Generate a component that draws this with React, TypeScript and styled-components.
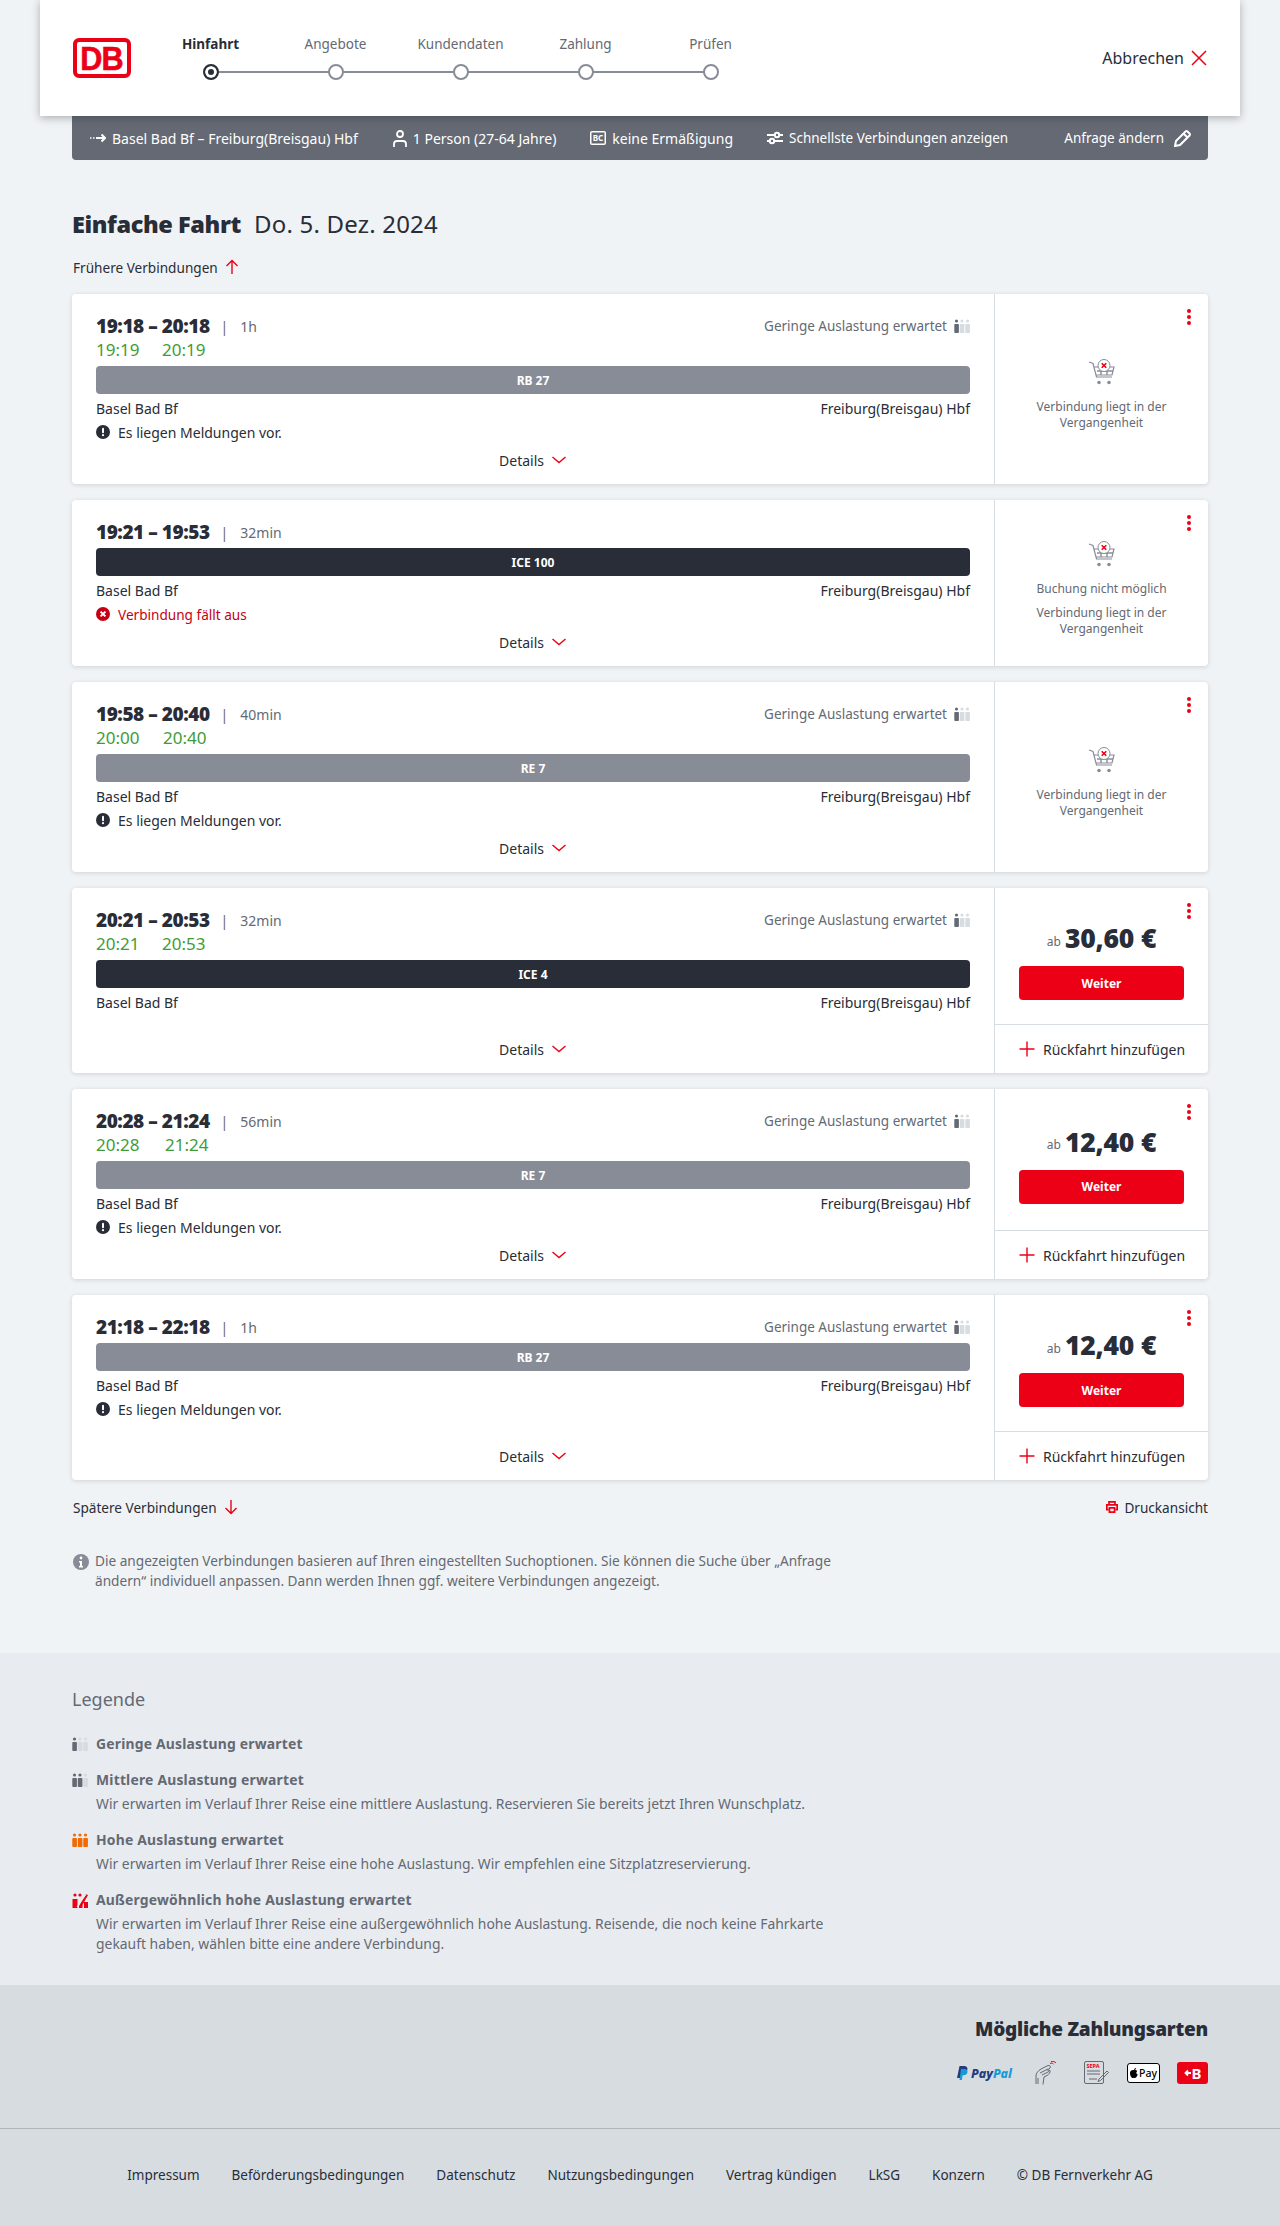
import React from "react";
import styled, { createGlobalStyle } from "styled-components";

const RED = "#ec0016";
const INK = "#282d37";
const MUTED = "#646973";
const FONT = `"Noto Sans", "Liberation Sans", sans-serif`;

const Global = createGlobalStyle`
  html, body { margin: 0; padding: 0; background: #f0f3f5; }
  body { font-family: ${FONT}; color: ${INK}; font-size: 14px; }
  * { box-sizing: border-box; }
`;

const Page = styled.div`
  width: 1280px;
  min-height: 2226px;
  display: flex;
  flex-direction: column;
`;

const Header = styled.header`
  position: relative;
  z-index: 2;
  margin: 0 40px;
  height: 116px;
  padding: 0 33px;
  background: #fff;
  display: flex;
  align-items: center;
  box-shadow: 0 2px 8px rgba(40, 45, 55, 0.35);
`;

const Logo = styled.div`
  width: 58px;
  height: 40px;
  border: 4px solid ${RED};
  border-radius: 6px;
  background: #fff;
  color: ${RED};
  display: flex;
  align-items: center;
  justify-content: center;
  overflow: hidden;
  font: 700 34px/1 "Liberation Sans", sans-serif;
  -webkit-text-stroke: 0.6px ${RED};
  span { transform: scaleX(0.9); display: block; letter-spacing: -1px; }
`;

const Stepper = styled.ol`
  list-style: none;
  margin: 0 0 2px 17px;
  padding: 0;
  display: flex;
`;

const Step = styled.li<{ $last?: boolean }>`
  position: relative;
  width: 125px;
  height: 46px;
  display: flex;
  flex-direction: column;
  align-items: center;
  justify-content: space-between;
  &::after {
    content: "";
    display: ${(p) => (p.$last ? "none" : "block")};
    position: absolute;
    left: 62px;
    width: 125px;
    bottom: 7px;
    height: 2px;
    background: #878c96;
  }
`;

const StepLabel = styled.span<{ $active?: boolean }>`
  height: 20px;
  line-height: 20px;
  font-size: 13.5px;
  white-space: nowrap;
  font-weight: ${(p) => (p.$active ? 700 : 400)};
  color: ${(p) => (p.$active ? INK : MUTED)};
`;

const StepDot = styled.span<{ $active?: boolean }>`
  position: relative;
  z-index: 1;
  width: 16px;
  height: 16px;
  border-radius: 50%;
  background: ${(p) => (p.$active ? INK : "#fff")};
  box-shadow: ${(p) => (p.$active ? "inset 0 0 0 3px #fff" : "none")};
  border: 2px solid ${(p) => (p.$active ? INK : "#878c96")};
`;

const Cancel = styled.div`
  margin-left: auto;
  display: flex;
  align-items: center;
  gap: 7px;
  font-size: 16px;
`;

const SummaryBar = styled.div`
  margin: 0 72px;
  height: 44px;
  padding: 0 17px 0 18px;
  background: ${MUTED};
  border-radius: 0 0 4px 4px;
  color: #fff;
  display: flex;
  align-items: center;
  font-size: 14px;
`;

const SummaryItem = styled.span<{ $gap: number; $tight?: boolean }>`
  display: flex;
  align-items: center;
  gap: 6px;
  margin-right: ${(p) => p.$gap}px;
  white-space: nowrap;
  font-size: ${(p) => (p.$tight ? "13.5px" : "14px")};
`;

const ChangeRequest = styled.span`
  margin-left: auto;
  display: flex;
  align-items: center;
  gap: 10px;
  font-size: 13.5px;
`;

const Main = styled.main`
  margin: 0 72px;
  display: flex;
  flex-direction: column;
`;

const Title = styled.h1`
  margin: 47px 0 0;
  height: 34px;
  line-height: 34px;
  font-size: 24px;
  font-weight: 400;
  display: flex;
  gap: 13px;
  letter-spacing: 0.2px;
  strong { font-weight: 900; font-size: 23.5px; letter-spacing: -0.4px; }
`;

const MoreLink = styled.div`
  height: 22px;
  display: flex;
  align-items: center;
  gap: 6px;
  padding-left: 1px;
  font-size: 13.6px;
`;

const EarlierRow = styled.div`
  margin: 15px 0 16px;
`;

const CardList = styled.div`
  display: flex;
  flex-direction: column;
  gap: 16px;
`;

const Card = styled.article`
  display: flex;
  background: #fff;
  border-radius: 4px;
  box-shadow: 0 1px 4px rgba(40, 45, 55, 0.16);
`;

const Left = styled.div`
  flex: 1;
  min-width: 0;
  padding: 20px 24px 11px;
  display: flex;
  flex-direction: column;
`;

const TimeRow = styled.div`
  height: 24px;
  display: flex;
  align-items: center;
`;

const Times = styled.strong`
  font-size: 19px;
  font-weight: 900;
  letter-spacing: -0.45px;
`;

const Duration = styled.span`
  font-size: 14px;
  color: ${MUTED};
  margin-left: 11px;
  &::before {
    content: "|";
    margin-right: 12px;
  }
`;

const Occupancy = styled.span`
  margin-left: auto;
  display: flex;
  align-items: center;
  gap: 7px;
  color: ${MUTED};
  font-size: 13.5px;
`;

const LiveRow = styled.div`
  height: 24px;
  display: flex;
  color: #3f9c35;
  font-size: 17px;
  line-height: 24px;
`;

const LiveTime = styled.span<{ $w: number }>`
  width: ${(p) => p.$w}px;
`;

const TrainBar = styled.div<{ $dark?: boolean }>`
  margin-top: 4px;
  height: 28px;
  border-radius: 4px;
  background: ${(p) => (p.$dark ? INK : "#878c96")};
  color: #fff;
  font-size: 12px;
  font-weight: 700;
  display: flex;
  align-items: center;
  justify-content: center;
`;

const Stations = styled.div`
  height: 28px;
  display: flex;
  align-items: center;
  justify-content: space-between;
  font-size: 14px;
`;

const Message = styled.div<{ $error?: boolean }>`
  height: 20px;
  display: flex;
  align-items: center;
  gap: 8px;
  font-size: ${(p) => (p.$error ? "13.6px" : "14px")};
  color: ${(p) => (p.$error ? "#c50014" : INK)};
`;

const Details = styled.div`
  margin-top: auto;
  padding-top: 6px;
  padding-bottom: 1px;
  height: 31px;
  display: flex;
  align-items: center;
  justify-content: center;
  gap: 7px;
  font-size: 14px;
`;

const Right = styled.div`
  position: relative;
  flex: 0 0 214px;
  border-left: 1px solid #d7dce1;
  display: flex;
  flex-direction: column;
`;

const Dots = styled.span`
  position: absolute;
  top: 15px;
  right: 17px;
  display: flex;
  flex-direction: column;
  gap: 2px;
  i {
    display: block;
    width: 4px;
    height: 4px;
    border-radius: 50%;
    background: ${RED};
  }
`;

const Past = styled.div`
  flex: 1;
  padding: 11px 24px 0;
  display: flex;
  flex-direction: column;
  align-items: center;
  justify-content: center;
  text-align: center;
  color: ${MUTED};
  font-size: 12px;
  line-height: 16px;
`;

const PastNote = styled.p`
  margin: 8px 0 0;
  &:first-of-type { margin-top: 13px; }
`;

const Offer = styled.div`
  flex: 1;
  padding: 34px 24px 24px;
  display: flex;
  flex-direction: column;
  justify-content: center;
  gap: 12px;
`;

const Price = styled.div`
  height: 32px;
  display: flex;
  align-items: center;
  justify-content: center;
  gap: 4px;
  small { font-size: 12px; color: ${MUTED}; margin-top: 6px; }
  strong { font-size: 26.5px; font-weight: 900; letter-spacing: -0.2px; }
`;

const Continue = styled.button`
  height: 34px;
  border: 0;
  border-radius: 4px;
  background: ${RED};
  color: #fff;
  font: 700 12px ${FONT};
`;

const ReturnRow = styled.div`
  height: 49px;
  border-top: 1px solid #d7dce1;
  padding-left: 24px;
  display: flex;
  align-items: center;
  gap: 8px;
  font-size: 14px;
`;

const BottomRow = styled.div`
  margin-top: 16px;
  display: flex;
  justify-content: space-between;
`;

const InfoBlock = styled.div`
  margin-top: 33px;
  padding-left: 1px;
  display: flex;
  gap: 6px;
  color: ${MUTED};
  font-size: 13.65px;
  line-height: 20px;
  svg { margin-top: 3px; flex: none; }
`;

const LegendSection = styled.section`
  margin-top: 62px;
  background: #e8ecf0;
  padding: 36px 72px 31px;
`;

const LegendTitle = styled.h2`
  margin: 0 0 25px;
  font-size: 18px;
  line-height: 20px;
  font-weight: 400;
  color: ${MUTED};
`;

const LegendEntry = styled.div`
  display: grid;
  grid-template-columns: 24px 1fr;
  margin-top: 16px;
  color: ${MUTED};
  font-size: 13.9px;
  line-height: 20px;
  align-items: center;
  strong { font-weight: 700; letter-spacing: 0.2px; }
`;

const LegendText = styled.p`
  grid-column: 2;
  margin: 4px 0 0;
`;

const PaymentSection = styled.section`
  background: #d7dce1;
  border-bottom: 1px solid #afb4bb;
  padding: 32px 72px 42px;
  display: flex;
  flex-direction: column;
  align-items: flex-end;
`;

const PaymentTitle = styled.h2`
  margin: 0;
  font-size: 19px;
  line-height: 24px;
  font-weight: 900;
  letter-spacing: -0.25px;
`;

const PaymentRow = styled.div`
  margin-top: 19px;
  height: 26px;
  display: flex;
  align-items: center;
`;

const PayPal = styled.span`
  display: flex;
  align-items: center;
  gap: 3px;
  font: italic 800 12.5px ${FONT};
  color: #253b80;
  b { color: #179bd7; font-weight: 800; }
`;

const ApplePay = styled.span`
  width: 33px;
  height: 20px;
  margin-left: 18px;
  border: 1px solid #000;
  border-radius: 3px;
  background: #fff;
  display: flex;
  align-items: center;
  justify-content: center;
  gap: 1px;
  color: #000;
  font-size: 10.5px;
  font-weight: 500;
`;

const DBCard = styled.span`
  width: 31px;
  height: 22px;
  margin-left: 17px;
  border-radius: 3px;
  background: ${RED};
  color: #fff;
  display: flex;
  align-items: center;
  justify-content: center;
  font-size: 15px;
  line-height: 1;
  font-weight: 700;
`;

const PayIcon = styled.svg<{ $m: number }>`
  margin-left: ${(p) => p.$m}px;
`;

const Footer = styled.footer`
  background: #d7dce1;
  padding: 36px 0 44px;
  display: flex;
  justify-content: center;
  gap: 32px;
  font-size: 13.5px;
  line-height: 20px;
`;

const Thin = ({ d, c = RED, s = 16, w = 1.4 }: { d: string; c?: string; s?: number; w?: number }) => (
  <svg width={s} height={s} viewBox="0 0 16 16" fill="none" stroke={c} strokeWidth={w}>
    <path d={d} />
  </svg>
);

const Chevron = () => <Thin d="M1.5 5 L8 10.5 L14.5 5" />;
const Up = () => <Thin d="M8 15V1.5M2.5 7L8 1.5L13.5 7" />;
const Down = () => <Thin d="M8 1V14.5M2.5 9L8 14.5L13.5 9" />;
const Plus = () => <Thin d="M0.5 8H15.5M8 0.5V15.5" />;
const Close = () => <Thin d="M1 1L15 15M15 1L1 15" w={1.5} />;

const Occ = ({ level, color = MUTED }: { level: number; color?: string }) => {
  const f = (i: number) => (i < level ? color : "#d7dce1");
  return (
    <svg width="16" height="14" viewBox="0 0 16 14">
      {[0, 1, 2].map((i) => (
        <g key={i} fill={f(i)}>
          <circle cx={2.5 + i * 5.5} cy="2" r="1.6" />
          <rect x={0.3 + i * 5.5} y="5" width="4.6" height="9" rx="0.8" />
        </g>
      ))}
    </svg>
  );
};

const OccRed = () => (
  <svg width="16" height="16" viewBox="0 0 16 16">
    <g fill={RED}>
      <circle cx="3" cy="3" r="1.6" />
      <circle cx="8" cy="3" r="1.6" />
      <path d="M0.5 7h5v9h-5zM7 14l7-12 2 1-5.5 10v3H7zM12 10h4v6h-4z" />
    </g>
    <path d="M5 15L15 1" stroke="#e8ecf0" strokeWidth="1" />
  </svg>
);

const Alert = () => (
  <svg width="14" height="14" viewBox="0 0 14 14">
    <circle cx="7" cy="7" r="7" fill={INK} />
    <rect x="6" y="2.8" width="2" height="5.4" rx="1" fill="#fff" />
    <circle cx="7" cy="10.2" r="1.1" fill="#fff" />
  </svg>
);

const Cancelled = () => (
  <svg width="14" height="14" viewBox="0 0 14 14">
    <circle cx="7" cy="7" r="7" fill="#c50014" />
    <path d="M4.6 4.6L9.4 9.4M9.4 4.6L4.6 9.4" stroke="#fff" strokeWidth="2" />
  </svg>
);

const Cart = () => (
  <svg width="28" height="28" viewBox="0 0 28 28" fill="none">
    <path d="M1 4L5 5.5L8.5 19H24" stroke="#878c96" strokeWidth="1.2" />
    <path d="M6 9H26L24 17H8" stroke="#878c96" strokeWidth="1.2" />
    <path d="M9 13H25M13 9V17M19 9V17" stroke="#878c96" strokeWidth="1.4" />
    <circle cx="11" cy="24.5" r="1.8" fill="#878c96" />
    <circle cx="21" cy="24.5" r="1.8" fill="#878c96" />
    <circle cx="16" cy="7.5" r="6" fill="#fff" stroke="#878c96" />
    <path d="M13.7 5.2L18.3 9.8M18.3 5.2L13.7 9.8" stroke={RED} strokeWidth="1.6" />
  </svg>
);

const Route = () => (
  <svg width="16" height="10" viewBox="0 0 16 10" fill="none" stroke="#fff">
    <path d="M0 5h1.5M3 5h1.5" strokeWidth="1.4" />
    <path d="M6 5h9M11.5 1.5L15 5l-3.5 3.5" strokeWidth="2" />
  </svg>
);

const Person = () => (
  <svg width="14" height="17" viewBox="0 0 14 17" fill="none" stroke="#fff" strokeWidth="1.8">
    <circle cx="7" cy="4" r="3" />
    <path d="M1 17v-3c0-2 1-3 3-3h6c2 0 3 1 3 3v3" />
  </svg>
);

const BahnCard = () => (
  <svg width="16" height="14" viewBox="0 0 16 14">
    <rect x="0" y="0" width="16" height="14" rx="2" fill="#fff" />
    <rect x="1.500" y="1.500" width="13" height="11" fill={MUTED} />
    <text x="8" y="10" textAnchor="middle" fontSize="8" fontWeight="700" fill="#fff">BC</text>
  </svg>
);

const Sliders = () => (
  <svg width="16" height="14" viewBox="0 0 16 14" fill="none" stroke="#fff" strokeWidth="2">
    <path d="M0 4h7M13 4h3M0 10h2M8 10h8" />
    <circle cx="10" cy="4" r="2.2" />
    <circle cx="5" cy="10" r="2.2" />
  </svg>
);

const Pen = () => (
  <svg width="17" height="17" viewBox="0 0 17 17" fill="none" stroke="#fff" strokeWidth="2">
    <path d="M1 16l1-5L11.5 1.5a1.5 1.5 0 012 0l2 2a1.5 1.5 0 010 2L6 15z" />
    <path d="M9.5 3.5l4 4" />
  </svg>
);

const Printer = () => (
  <svg width="12" height="12" viewBox="0 0 14 14" fill="none" stroke={RED} strokeWidth="2">
    <path d="M3.500 4V1h7v3" />
    <path d="M3 10H1V4.500h12V10h-2" />
    <path d="M4 8h6v5H4z" />
  </svg>
);

const Info = () => (
  <svg width="16" height="16" viewBox="0 0 16 16">
    <circle cx="8" cy="8" r="8" fill="#878c96" />
    <circle cx="8" cy="4" r="1.4" fill="#fff" />
    <path d="M6 7h3v5h1v1.5H6V12h1V8.5H6z" fill="#fff" />
  </svg>
);

type Conn = {
  times: string;
  dur: string;
  live?: [string, string];
  liveW?: number;
  occ?: boolean;
  train: string;
  dark?: boolean;
  msg?: "info" | "error";
  price?: string;
  blocked?: boolean;
};

const connections: Conn[] = [
  { times: "19:18 – 20:18", dur: "1h", live: ["19:19", "20:19"], liveW: 66, occ: true, train: "RB 27", msg: "info" },
  { times: "19:21 – 19:53", dur: "32min", train: "ICE 100", dark: true, msg: "error", blocked: true },
  { times: "19:58 – 20:40", dur: "40min", live: ["20:00", "20:40"], liveW: 67, occ: true, train: "RE 7", msg: "info" },
  { times: "20:21 – 20:53", dur: "32min", live: ["20:21", "20:53"], liveW: 66, occ: true, train: "ICE 4", dark: true, price: "30,60 €" },
  { times: "20:28 – 21:24", dur: "56min", live: ["20:28", "21:24"], liveW: 69, occ: true, train: "RE 7", msg: "info", price: "12,40 €" },
  { times: "21:18 – 22:18", dur: "1h", occ: true, train: "RB 27", msg: "info", price: "12,40 €" },
];

const steps = ["Hinfahrt", "Angebote", "Kundendaten", "Zahlung", "Prüfen"];
const links = [
  "Impressum",
  "Beförderungsbedingungen",
  "Datenschutz",
  "Nutzungsbedingungen",
  "Vertrag kündigen",
  "LkSG",
  "Konzern",
  "© DB Fernverkehr AG",
];

const Connection = ({ c }: { c: Conn }) => (
  <Card>
    <Left>
      <TimeRow>
        <Times>{c.times}</Times>
        <Duration>{c.dur}</Duration>
        {c.occ && (
          <Occupancy>
            Geringe Auslastung erwartet <Occ level={1} />
          </Occupancy>
        )}
      </TimeRow>
      {c.live && (
        <LiveRow>
          <LiveTime $w={c.liveW ?? 66}>{c.live[0]}</LiveTime>
          <span>{c.live[1]}</span>
        </LiveRow>
      )}
      <TrainBar $dark={c.dark}>{c.train}</TrainBar>
      <Stations>
        <span>Basel Bad Bf</span>
        <span>Freiburg(Breisgau) Hbf</span>
      </Stations>
      {c.msg === "info" && (
        <Message>
          <Alert /> Es liegen Meldungen vor.
        </Message>
      )}
      {c.msg === "error" && (
        <Message $error>
          <Cancelled /> Verbindung fällt aus
        </Message>
      )}
      <Details>
        Details <Chevron />
      </Details>
    </Left>
    <Right>
      <Dots>
        <i />
        <i />
        <i />
      </Dots>
      {c.price ? (
        <>
          <Offer>
            <Price>
              <small>ab</small>
              <strong>{c.price}</strong>
            </Price>
            <Continue>Weiter</Continue>
          </Offer>
          <ReturnRow>
            <Plus /> Rückfahrt hinzufügen
          </ReturnRow>
        </>
      ) : (
        <Past>
          <Cart />
          {c.blocked && <PastNote>Buchung nicht möglich</PastNote>}
          <PastNote>
            Verbindung liegt in der
            <br />
            Vergangenheit
          </PastNote>
        </Past>
      )}
    </Right>
  </Card>
);

export default function App() {
  return (
    <Page>
      <Global />
      <Header>
        <Logo>
          <span>DB</span>
        </Logo>
        <Stepper>
          {steps.map((s, i) => (
            <Step key={s} $last={i === steps.length - 1}>
              <StepLabel $active={i === 0}>{s}</StepLabel>
              <StepDot $active={i === 0} />
            </Step>
          ))}
        </Stepper>
        <Cancel>
          Abbrechen <Close />
        </Cancel>
      </Header>
      <SummaryBar>
        <SummaryItem $gap={35}>
          <Route /> Basel Bad Bf – Freiburg(Breisgau) Hbf
        </SummaryItem>
        <SummaryItem $gap={34}>
          <Person /> 1 Person (27-64 Jahre)
        </SummaryItem>
        <SummaryItem $gap={34}>
          <BahnCard /> keine Ermäßigung
        </SummaryItem>
        <SummaryItem $gap={0} $tight>
          <Sliders /> Schnellste Verbindungen anzeigen
        </SummaryItem>
        <ChangeRequest>
          Anfrage ändern <Pen />
        </ChangeRequest>
      </SummaryBar>
      <Main>
        <Title>
          <strong>Einfache Fahrt</strong>
          <span>Do. 5. Dez. 2024</span>
        </Title>
        <EarlierRow>
          <MoreLink>
            Frühere Verbindungen <Up />
          </MoreLink>
        </EarlierRow>
        <CardList>
          {connections.map((c) => (
            <Connection key={c.times} c={c} />
          ))}
        </CardList>
        <BottomRow>
          <MoreLink>
            Spätere Verbindungen <Down />
          </MoreLink>
          <MoreLink>
            <Printer /> Druckansicht
          </MoreLink>
        </BottomRow>
        <InfoBlock>
          <Info />
          <span>
            Die angezeigten Verbindungen basieren auf Ihren eingestellten Suchoptionen. Sie können die Suche über „Anfrage
            <br />
            ändern“ individuell anpassen. Dann werden Ihnen ggf. weitere Verbindungen angezeigt.
          </span>
        </InfoBlock>
      </Main>
      <LegendSection>
        <LegendTitle>Legende</LegendTitle>
        <LegendEntry>
          <Occ level={1} />
          <strong>Geringe Auslastung erwartet</strong>
        </LegendEntry>
        <LegendEntry>
          <Occ level={2} />
          <strong>Mittlere Auslastung erwartet</strong>
          <LegendText>Wir erwarten im Verlauf Ihrer Reise eine mittlere Auslastung. Reservieren Sie bereits jetzt Ihren Wunschplatz.</LegendText>
        </LegendEntry>
        <LegendEntry>
          <Occ level={3} color="#f26a00" />
          <strong>Hohe Auslastung erwartet</strong>
          <LegendText>Wir erwarten im Verlauf Ihrer Reise eine hohe Auslastung. Wir empfehlen eine Sitzplatzreservierung.</LegendText>
        </LegendEntry>
        <LegendEntry>
          <OccRed />
          <strong>Außergewöhnlich hohe Auslastung erwartet</strong>
          <LegendText>
            Wir erwarten im Verlauf Ihrer Reise eine außergewöhnlich hohe Auslastung. Reisende, die noch keine Fahrkarte
            <br />
            gekauft haben, wählen bitte eine andere Verbindung.
          </LegendText>
        </LegendEntry>
      </LegendSection>
      <PaymentSection>
        <PaymentTitle>Mögliche Zahlungsarten</PaymentTitle>
        <PaymentRow>
          <PayPal>
            <svg width="11" height="14" viewBox="0 0 11 14">
              <path d="M2.5 0h4.5c2.5 0 3.8 1.300 3.400 3.500-.5 2.500-2.300 3.600-4.500 3.600H4.200L3.300 12H0z" fill="#253b80" />
              <path d="M4 3h3.500c1.500 0 3.300.8 3 3-.4 2.300-2 3.300-3.800 3.300H5.600L4.900 14H2.500z" fill="#179bd7" />
            </svg>
            <span>
              Pay<b>Pal</b>
            </span>
          </PayPal>
          <PayIcon $m={23} width="22" height="24" viewBox="0 0 22 24" fill="none" stroke={MUTED} strokeWidth="1">
            <path d="M1 23v-8c0-3 2-5 5-7l7-3.500c2-.5 3 1 2 2.500l-2.500 2 2.500.5c.5 2-1 4-3 5l-3 1.500-1 7.500" />
            <path d="M5 12l8-4M7 14l7-3.500M3 23v-6" />
            <path d="M15 2.500c1.500-.7 2.500-.5 3.500.5M16 .5c2-.4 4 .2 5 1.500" stroke={RED} />
          </PayIcon>
          <PayIcon $m={27} width="25" height="24" viewBox="0 0 25 24" fill="none" stroke={MUTED}>
            <rect x="0.500" y="0.500" width="19" height="22" rx="1.500" />
            <text x="2.500" y="7" fontSize="5.500" fontWeight="700" fill={RED} stroke="none">SEPA</text>
            <path d="M3 10h13M3 13h13M5 18h8M15 18l8-8 1.500 1.500-8 8-2.500 1z" />
          </PayIcon>
          <ApplePay>
            <svg width="8" height="10" viewBox="0 0 8 10">
              <path d="M4 2.300C4.800 1.800 6.300 1.700 7.300 3c-1.500 1-1.200 3 .5 3.600C7.200 8.300 6.200 10 5.200 10c-.5 0-.8-.3-1.300-.3s-.9.300-1.300.3C1.500 10 0 7.300 0 5.200 0 2.700 2.400 1.500 4 2.300zM4 2c0-1 .8-2 2-2 .1 1.100-.9 2.100-2 2z" fill="#000" />
            </svg>
            Pay
          </ApplePay>
          <DBCard>
            <svg width="8" height="10" viewBox="0 0 8 10" fill="none" stroke="#fff" strokeWidth="1.800">
              <path d="M7 5H2M4 2.500L1.500 5 4 7.500" />
            </svg>
            B
          </DBCard>
        </PaymentRow>
      </PaymentSection>
      <Footer>
        {links.map((l) => (
          <span key={l}>{l}</span>
        ))}
      </Footer>
    </Page>
  );
}
